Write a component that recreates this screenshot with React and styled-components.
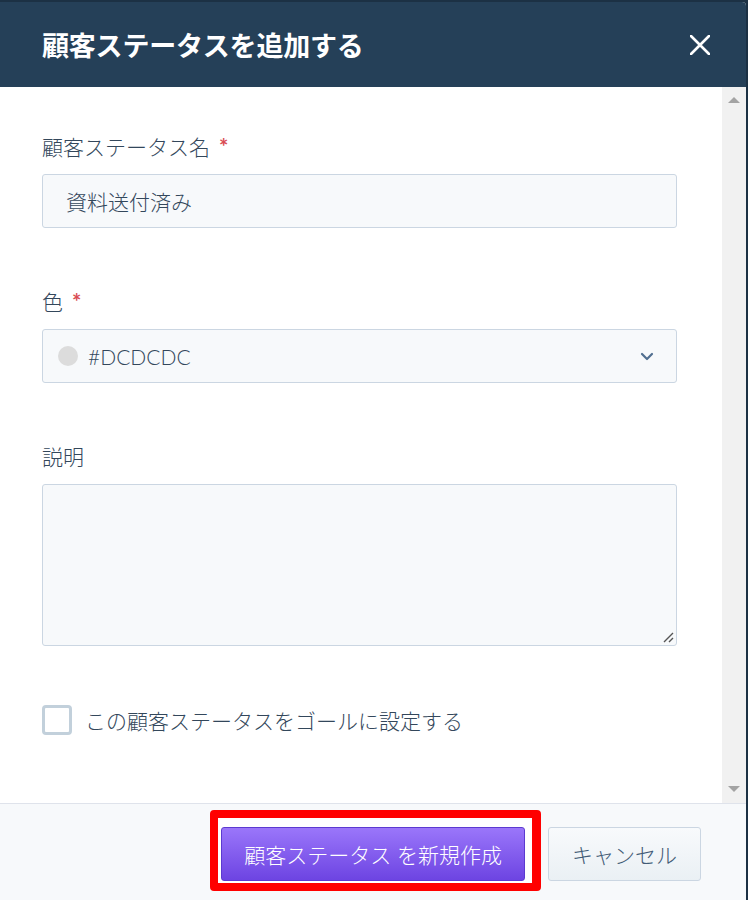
import React from 'react'
import styled, { createGlobalStyle } from 'styled-components'

const GlobalStyle = createGlobalStyle`
  html, body {
    margin: 0;
    padding: 0;
    background: #1c3144;
    font-family: Lato, "Noto Sans CJK JP", sans-serif;
  }
  * { box-sizing: border-box; }
`

const Modal = styled.div`
  width: 746px;
  height: 898px;
  margin-top: 2px;
  display: flex;
  flex-direction: column;
  background: #fff;
  border-top-right-radius: 4px;
  overflow: hidden;
`

const Header = styled.header`
  height: 85px;
  flex-shrink: 0;
  display: flex;
  align-items: center;
  justify-content: space-between;
  padding: 0 34px 0 42px;
  background: #254058;
`

const Title = styled.h1`
  margin: 0;
  color: #fff;
  font-size: 27px;
  font-weight: 700;
  letter-spacing: -0.2px;
`

const CloseBtn = styled.button`
  width: 24px;
  height: 24px;
  padding: 0;
  border: 0;
  background: none;
  display: flex;
  align-items: center;
  justify-content: center;
`

const Body = styled.div`
  flex: 1;
  display: flex;
  min-height: 0;
`

const Content = styled.div`
  flex: 1;
  padding: 44px 45px 0 42px;
`

const Scrollbar = styled.div`
  width: 24px;
  background: #f1f1f1;
  display: flex;
  flex-direction: column;
  justify-content: space-between;
  align-items: center;
  padding: 10px 0 11px;
`

const Arrow = styled.span`
  width: 0;
  height: 0;
  border-left: 6px solid transparent;
  border-right: 6px solid transparent;
  ${p => (p.$down ? 'border-top: 6px solid #a3a3a3;' : 'border-bottom: 6px solid #a3a3a3;')}
`

const Field = styled.div`
  margin-bottom: 58px;
`

const Label = styled.label`
  display: block;
  height: 32px;
  line-height: 32px;
  margin-bottom: 11px;
  font-size: 21px;
  font-weight: 300;
  color: #33475b;
`

const Required = styled.span`
  color: #d94c53;
  margin-left: 9px;
  font-size: 22px;
  font-weight: 700;
`

const Input = styled.div`
  height: 54px;
  display: flex;
  align-items: center;
  gap: 10px;
  padding: 0 ${p => (p.$select ? '22px' : '23px')} 0 ${p => (p.$select ? '15px' : '23px')};
  background: #f7f9fb;
  border: 1px solid #cbd6e2;
  border-radius: 3px;
  font-size: 21px;
  font-weight: 300;
  color: #33475b;
`

const Swatch = styled.span`
  width: 20px;
  height: 20px;
  border-radius: 50%;
  background: ${p => p.$color};
  flex-shrink: 0;
`

const Grow = styled.span`
  flex: 1;
`

const TextArea = styled.div`
  position: relative;
  height: 162px;
  background: #f7f9fb;
  border: 1px solid #cbd6e2;
  border-radius: 3px;
`

const Grip = styled.svg`
  position: absolute;
  right: 2px;
  bottom: 2px;
`

const CheckRow = styled.div`
  display: flex;
  align-items: center;
  gap: 13px;
  margin-top: 59px;
`

const CheckBox = styled.span`
  width: 30px;
  height: 30px;
  border: 3px solid #c2d0db;
  border-radius: 4px;
  background: #fff;
`

const CheckLabel = styled.span`
  font-size: 21px;
  font-weight: 300;
  color: #33475b;
`

const Footer = styled.footer`
  height: 97px;
  flex-shrink: 0;
  display: flex;
  justify-content: flex-end;
  align-items: flex-start;
  gap: 7px;
  padding: 6px 45px 0 0;
  background: #f7f9fb;
  border-top: 1px solid #dfe3eb;
`

const Highlight = styled.div`
  border: 8px solid #ff0000;
  border-right-width: 9px;
  border-radius: 4px;
  padding: 9px 7px 2px 3px;
  background: #fff;
`

const Button = styled.button`
  height: 54px;
  padding: 0 ${p => (p.$primary ? '22px' : '23px')};
  margin-top: ${p => (p.$primary ? '0' : '17px')};
  border-radius: 3px;
  font-family: Lato, "Noto Sans CJK JP", sans-serif;
  font-size: 21px;
  font-weight: 300;
  color: ${p => (p.$primary ? '#fff' : '#425b76')};
  border: 1px solid ${p => (p.$primary ? '#5c3ad0' : '#cbd6e2')};
  background: ${p =>
    p.$primary
      ? 'linear-gradient(to bottom, #9a76fa, #6d44e2)'
      : 'linear-gradient(to bottom, #f8fafc, #eaf0f4)'};
  white-space: pre;
`

export default function App() {
  return (
    <>
      <GlobalStyle />
      <Modal>
        <Header>
          <Title>顧客ステータスを追加する</Title>
          <CloseBtn aria-label="close">
            <svg width="20" height="20" viewBox="0 0 20 20">
              <path d="M1 1 L19 19 M19 1 L1 19" stroke="#fff" strokeWidth="2.6" strokeLinecap="round" />
            </svg>
          </CloseBtn>
        </Header>
        <Body>
          <Content>
            <Field>
              <Label>顧客ステータス名<Required>*</Required></Label>
              <Input>資料送付済み</Input>
            </Field>
            <Field>
              <Label>色<Required>*</Required></Label>
              <Input $select>
                <Swatch $color="#dcdcdc" />
                <Grow>#DCDCDC</Grow>
                <svg width="14" height="9" viewBox="0 0 14 9">
                  <path d="M2 2 L7 7 L12 2" fill="none" stroke="#516f90" strokeWidth="2.2" strokeLinecap="round" strokeLinejoin="round" />
                </svg>
              </Input>
            </Field>
            <div>
              <Label>説明</Label>
              <TextArea>
                <Grip width="12" height="12" viewBox="0 0 12 12">
                  <path d="M11 2 L2 11 M11 7 L7 11" stroke="#555" strokeWidth="1.4" />
                </Grip>
              </TextArea>
            </div>
            <CheckRow>
              <CheckBox />
              <CheckLabel>この顧客ステータスをゴールに設定する</CheckLabel>
            </CheckRow>
          </Content>
          <Scrollbar>
            <Arrow />
            <Arrow $down />
          </Scrollbar>
        </Body>
        <Footer>
          <Highlight>
            <Button $primary>顧客ステータス を新規作成</Button>
          </Highlight>
          <Button>キャンセル</Button>
        </Footer>
      </Modal>
    </>
  )
}
